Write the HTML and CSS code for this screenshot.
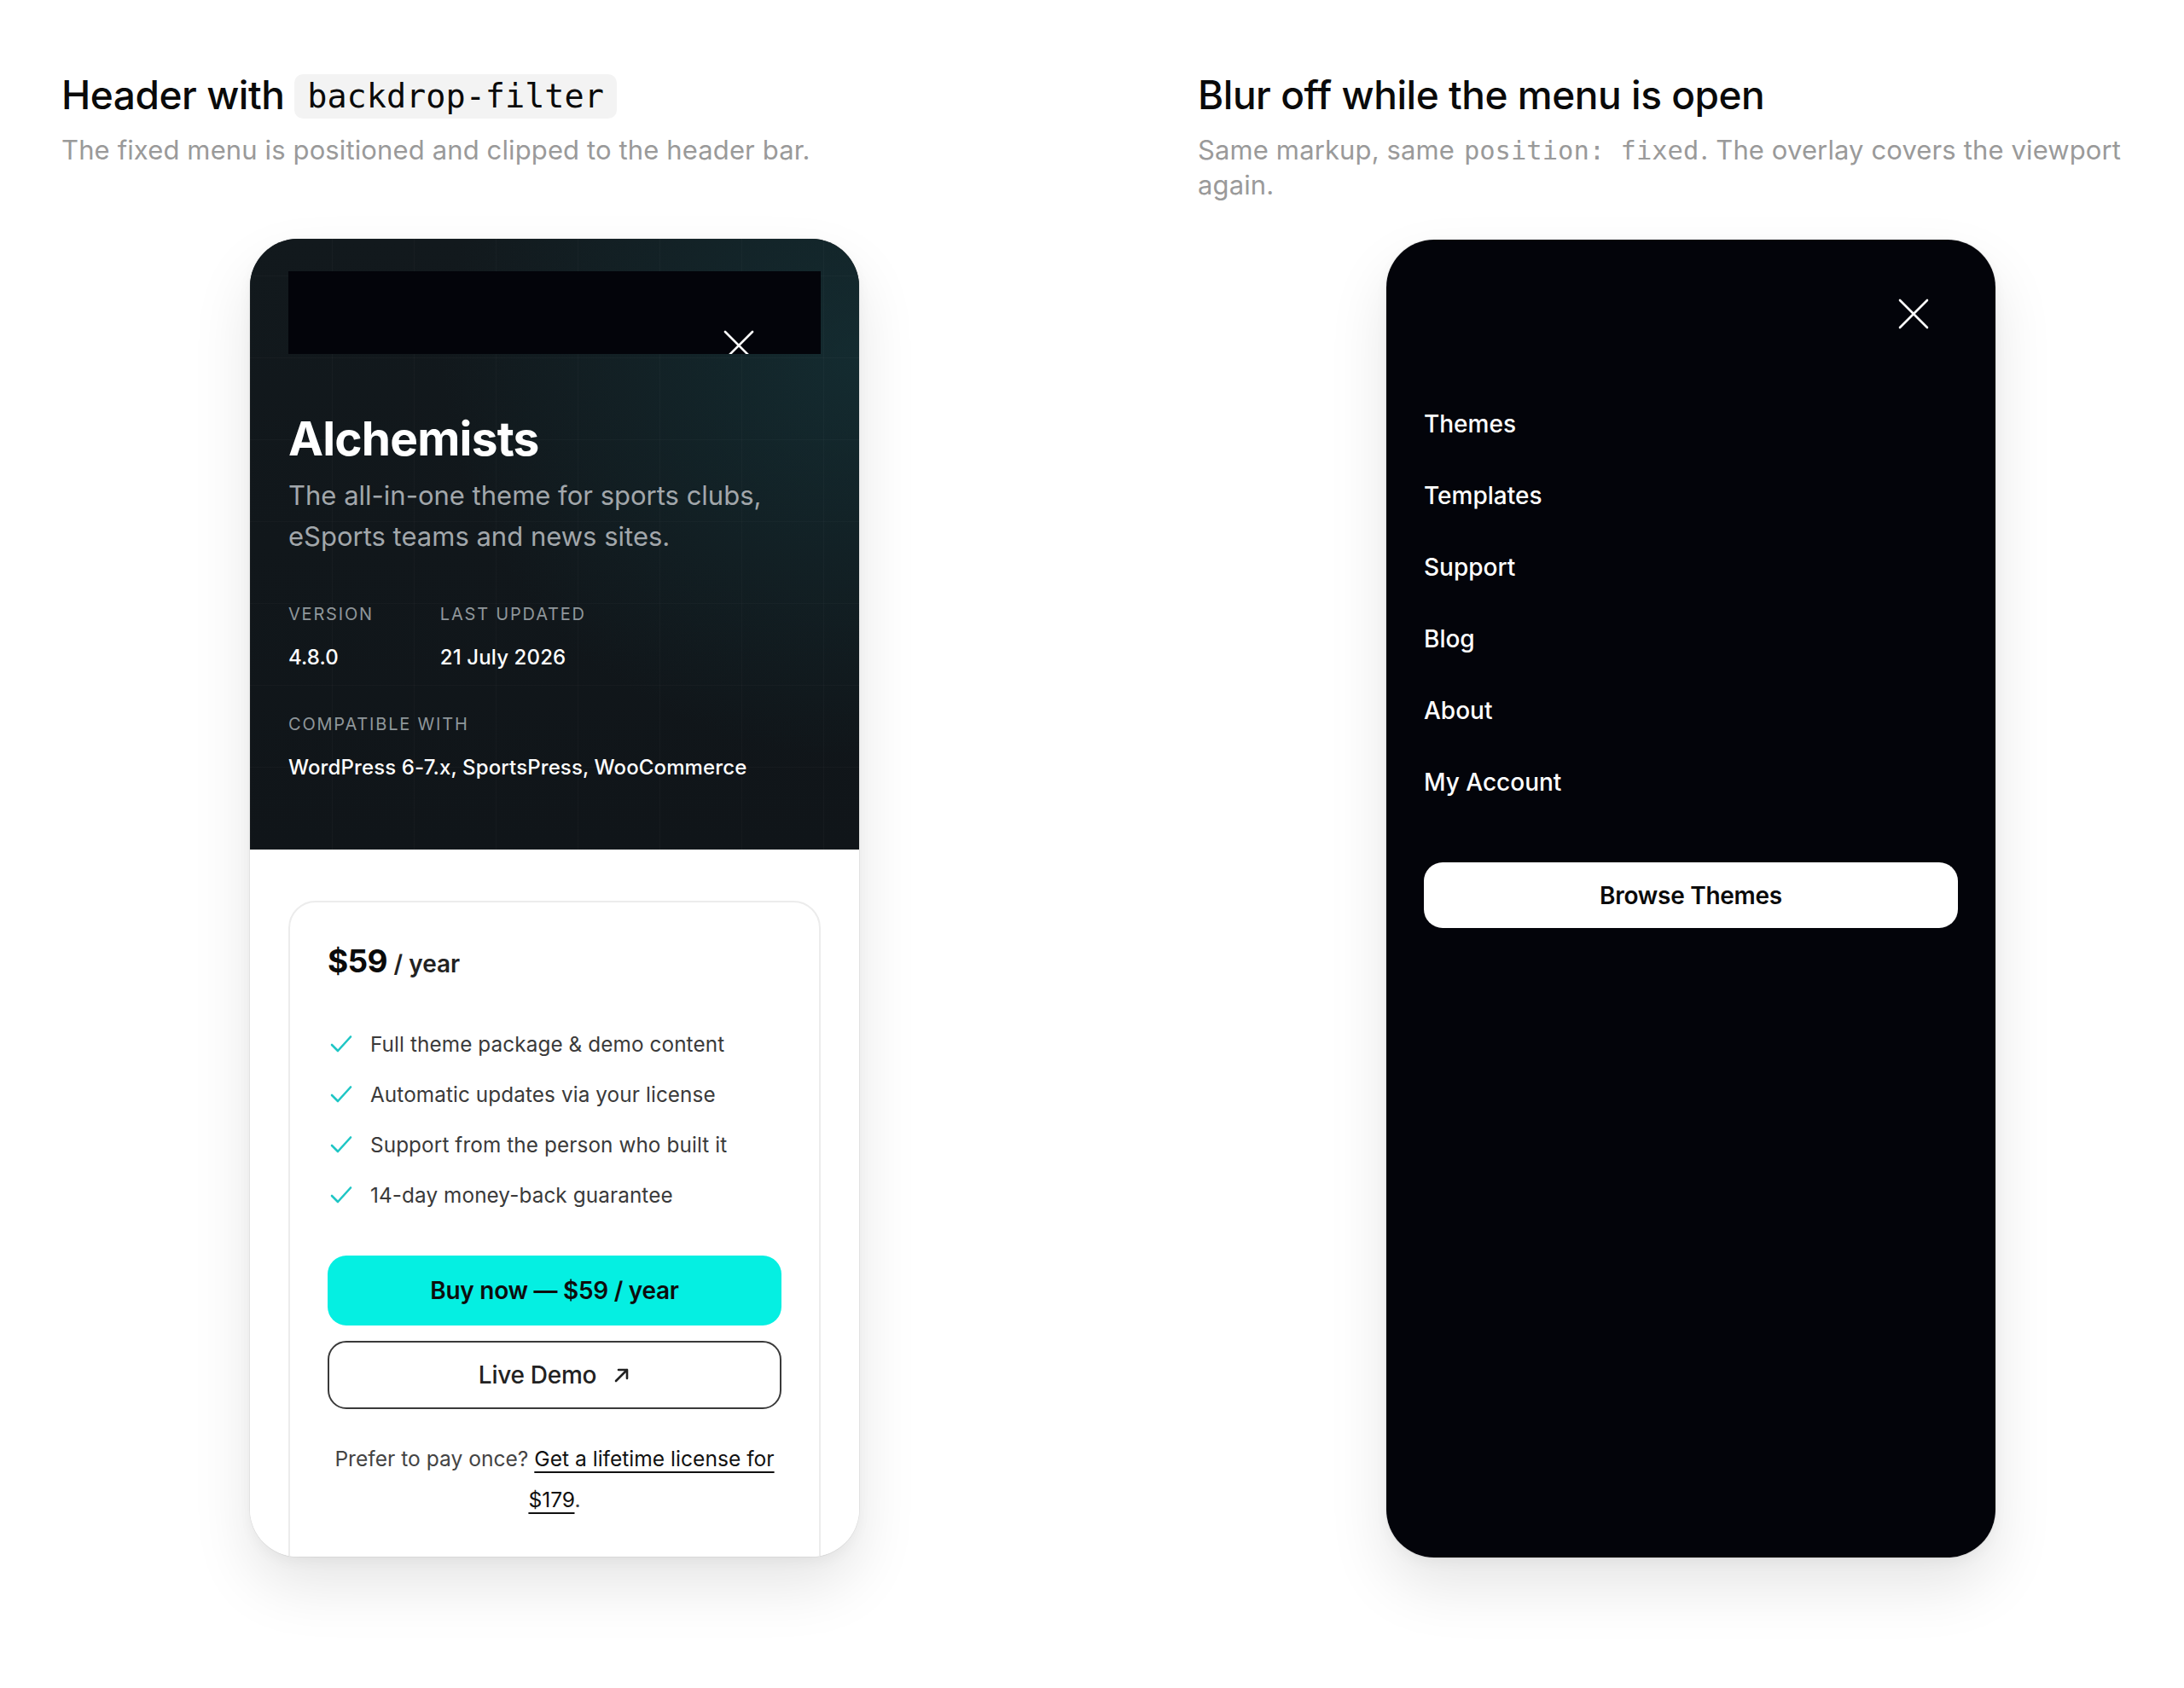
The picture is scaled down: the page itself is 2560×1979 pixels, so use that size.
FILE: index.html
```html
<!DOCTYPE html>
<html lang="en">
<head>
<meta charset="utf-8">
<title>Fixed menu inside a backdrop-filter header</title>
<link rel="stylesheet" href="styles.css">
</head>
<body>
<main class="compare">

  <section class="case">
    <header class="intro">
      <h2 class="intro-title">Header with <code class="chip">backdrop-filter</code></h2>
      <p class="intro-text">The fixed menu is positioned and clipped to the header bar.</p>
    </header>

    <div class="phone">
      <div class="hero">
        <div class="site-bar">
          <div class="menu">
            <button class="menu-close" type="button" aria-label="Close menu">
              <svg viewBox="0 0 48 48" width="48" height="48" aria-hidden="true"><path d="M8 8 L40 40 M40 8 L8 40" /></svg>
            </button>
          </div>
        </div>

        <h1 class="product">Alchemists</h1>
        <p class="tagline">The all-in-one theme for sports clubs, eSports teams and news sites.</p>

        <div class="meta">
          <div class="meta-item">
            <span class="meta-label">Version</span>
            <span class="meta-value">4.8.0</span>
          </div>
          <div class="meta-item">
            <span class="meta-label">Last updated</span>
            <span class="meta-value">21 July 2026</span>
          </div>
          <div class="meta-item meta-wide">
            <span class="meta-label">Compatible with</span>
            <span class="meta-value">WordPress 6-7.x, SportsPress, WooCommerce</span>
          </div>
        </div>
      </div>

      <div class="pricing">
        <div class="price-card">
          <p class="price"><strong>$59</strong> <span>/ year</span></p>
          <ul class="features">
            <li><svg class="tick" viewBox="0 0 28 28" width="28" height="28" aria-hidden="true"><path d="M3 15 L10 22 L25 5.5" /></svg>Full theme package &amp; demo content</li>
            <li><svg class="tick" viewBox="0 0 28 28" width="28" height="28" aria-hidden="true"><path d="M3 15 L10 22 L25 5.5" /></svg>Automatic updates via your license</li>
            <li><svg class="tick" viewBox="0 0 28 28" width="28" height="28" aria-hidden="true"><path d="M3 15 L10 22 L25 5.5" /></svg>Support from the person who built it</li>
            <li><svg class="tick" viewBox="0 0 28 28" width="28" height="28" aria-hidden="true"><path d="M3 15 L10 22 L25 5.5" /></svg>14-day money-back guarantee</li>
          </ul>
          <a class="btn btn-buy" href="#buy">Buy now — $59 / year</a>
          <a class="btn btn-demo" href="#demo">Live Demo
            <svg class="arrow" viewBox="0 0 20 20" width="20" height="20" aria-hidden="true"><path d="M3 17 L16 4 M6 4 H16 V14" /></svg>
          </a>
          <p class="lifetime">Prefer to pay once? <a href="#lifetime">Get a lifetime license for $179</a>.</p>
        </div>
      </div>
    </div>
  </section>

  <section class="case">
    <header class="intro">
      <h2 class="intro-title">Blur off while the menu is open</h2>
      <p class="intro-text">Same markup, same <code class="inline-code">position: fixed</code>. The overlay covers the viewport again.</p>
    </header>

    <div class="phone">
      <nav class="menu menu-open">
        <button class="menu-close" type="button" aria-label="Close menu">
          <svg viewBox="0 0 48 48" width="48" height="48" aria-hidden="true"><path d="M8 8 L40 40 M40 8 L8 40" /></svg>
        </button>
        <ul class="menu-links">
          <li><a href="#themes">Themes</a></li>
          <li><a href="#templates">Templates</a></li>
          <li><a href="#support">Support</a></li>
          <li><a href="#blog">Blog</a></li>
          <li><a href="#about">About</a></li>
          <li><a href="#account">My Account</a></li>
        </ul>
        <a class="btn btn-browse" href="#browse">Browse Themes</a>
      </nav>
    </div>
  </section>

</main>
</body>
</html>
```

FILE: styles.css
```css
* {
  box-sizing: border-box;
}

html,
body {
  margin: 0;
  background: #ffffff;
}

body {
  font-family: "Inter", "Noto Sans", sans-serif;
  color: #0a0a0a;
  -webkit-font-smoothing: antialiased;
}

a {
  color: inherit;
  text-decoration: none;
}

/* two demos side by side */
.compare {
  display: grid;
  grid-template-columns: 1fr 1fr;
  column-gap: 176px;
  padding: 83px 0 120px 72px;
}

.case {
  display: flex;
  flex-direction: column;
}

.intro {
  min-height: 153px;
}

.intro-title {
  margin: 0;
  font-size: 46px;
  line-height: 56px;
  font-weight: 500;
  letter-spacing: -0.01em;
  color: #0a0a0a;
}

.chip {
  display: inline-block;
  padding: 0 15px;
  border-radius: 10px;
  background: #f3f3f3;
  font-family: "DejaVu Sans Mono", "Liberation Mono", monospace;
  font-size: 38.5px;
  line-height: 52px;
  font-weight: 400;
  letter-spacing: 0;
  vertical-align: 2px;
}

.intro-text {
  margin: 17px 0 0;
  max-width: 1110px;
  font-size: 31px;
  line-height: 40px;
  color: #9a9a9a;
  letter-spacing: 0.004em;
}

.inline-code {
  font-family: "DejaVu Sans Mono", "Liberation Mono", monospace;
  font-size: 30.5px;
  letter-spacing: 0;
  margin: 0 2px;
  color: #9a9a9a;
}

/* device frame */
.phone {
  position: relative;
  align-self: center;
  width: 714px;
  height: 1545px;
  margin-top: 44px;
  border-radius: 56px;
  overflow: hidden;
  background: #ffffff;
  display: flex;
  flex-direction: column;
  box-shadow:
    0 0 0 1px rgba(0, 0, 0, 0.05),
    0 34px 70px rgba(0, 0, 0, 0.10),
    0 6px 16px rgba(0, 0, 0, 0.04);
}

/* dark product hero */
.hero {
  height: 716px;
  flex: none;
  padding: 38px 45px 0;
  color: #ffffff;
  background-color: #11171b;
  background-image:
    repeating-linear-gradient(90deg, rgba(255, 255, 255, 0.022) 0 1px, transparent 1px 96px),
    repeating-linear-gradient(0deg, rgba(255, 255, 255, 0.022) 0 1px, transparent 1px 96px),
    radial-gradient(ellipse 95% 90% at 100% 20%, rgba(22, 66, 72, 0.45), rgba(22, 66, 72, 0) 72%),
    linear-gradient(180deg, #12191d 0%, #101519 100%);
}

.site-bar {
  position: relative;
  height: 97px;
  background: #03040a;
  overflow: hidden;
  backdrop-filter: blur(12px);
}

.menu {
  position: absolute;
  inset: 0;
  display: flex;
  flex-direction: column;
  padding: 0 44px;
  background: #03040a;
}

.menu-close {
  align-self: flex-end;
  width: 48px;
  height: 48px;
  margin: 63px 28px 0 0;
  padding: 0;
  border: 0;
  background: transparent;
  flex: none;
}

.menu-close svg {
  display: block;
  fill: none;
  stroke: #ffffff;
  stroke-width: 2.6;
  stroke-linecap: round;
}

.menu-links {
  list-style: none;
  margin: 63px 0 0;
  padding: 0;
}

.menu-links li {
  font-size: 28px;
  line-height: 84px;
  font-weight: 500;
  color: #ffffff;
}

.btn-browse {
  margin-top: 52px;
  height: 77px;
  border-radius: 22px;
  background: #ffffff;
  color: #0a0a0a;
}

.product {
  margin: 67px 0 0;
  font-size: 55px;
  line-height: 64px;
  font-weight: 700;
  letter-spacing: -0.015em;
}

.tagline {
  margin: 11px 0 0;
  font-size: 31px;
  line-height: 48px;
  color: #a2a7ab;
  letter-spacing: 0;
}

.meta {
  display: grid;
  grid-template-columns: auto 1fr;
  column-gap: 78px;
  row-gap: 48px;
  margin-top: 53px;
}

.meta-item {
  display: flex;
  flex-direction: column;
  gap: 21px;
}

.meta-wide {
  grid-column: 1 / -1;
}

.meta-label {
  font-size: 20px;
  line-height: 28px;
  letter-spacing: 0.09em;
  text-transform: uppercase;
  color: #8f969a;
}

.meta-value {
  font-size: 24px;
  line-height: 32px;
  font-weight: 500;
  color: #ffffff;
  letter-spacing: 0.005em;
}

/* pricing */
.pricing {
  flex: 1;
  padding: 60px 45px 0;
  background: #ffffff;
}

.price-card {
  border: 2px solid #ececec;
  border-radius: 32px;
  padding: 44px 44px 80px;
}

.price {
  margin: 0;
  font-size: 28px;
  line-height: 50px;
  color: #222;
}

.price strong {
  font-size: 37px;
  font-weight: 700;
  color: #0a0a0a;
  letter-spacing: -0.02em;
}

.price span {
  font-weight: 600;
  color: #222;
}

.features {
  list-style: none;
  margin: 52px 0 0;
  padding: 0;
  display: flex;
  flex-direction: column;
  gap: 25px;
}

.features li {
  display: flex;
  align-items: center;
  gap: 20px;
  font-size: 24.3px;
  line-height: 34px;
  color: #3a3a3a;
  letter-spacing: 0.004em;
}

.tick {
  flex: none;
  margin-left: 2px;
  fill: none;
  stroke: #1fc6c5;
  stroke-width: 2.6;
  stroke-linecap: round;
  stroke-linejoin: round;
}

.btn {
  display: flex;
  align-items: center;
  justify-content: center;
  gap: 20px;
  font-size: 28px;
  font-weight: 600;
  letter-spacing: -0.01em;
}

.btn-buy {
  margin-top: 54px;
  height: 82px;
  border-radius: 22px;
  background: #05efe2;
  color: #0d0d0d;
}

.btn-demo {
  margin-top: 18px;
  height: 80px;
  border-radius: 22px;
  border: 2px solid #3a3a3a;
  color: #222;
  font-weight: 500;
}

.arrow {
  fill: none;
  stroke: #222;
  stroke-width: 2.6;
  stroke-linecap: round;
  stroke-linejoin: round;
}

.lifetime {
  margin: 34px 0 0;
  text-align: center;
  font-size: 24.6px;
  line-height: 48px;
  color: #444;
  letter-spacing: 0;
}

.lifetime a {
  color: #111;
  text-decoration: underline;
  text-underline-offset: 6px;
  text-decoration-thickness: 2px;
}
```
